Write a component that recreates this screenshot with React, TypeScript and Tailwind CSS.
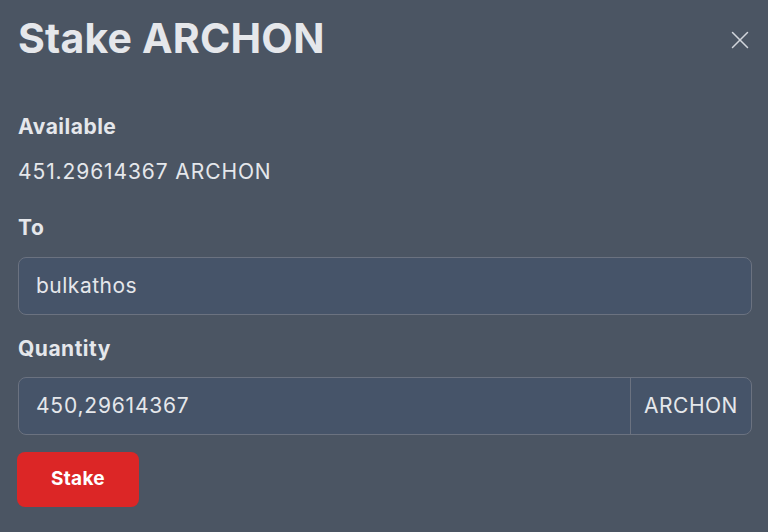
import { X } from 'lucide-react';

export default function App() {
  return (
    <div
      className="w-[768px] h-[532px] bg-[#4b5563] text-[#e5e7eb] overflow-hidden"
      style={{ fontFamily: 'Inter, "Open Sans", sans-serif' }}
    >
      <div className="flex items-center justify-between pl-[18px] pr-[13px] h-[76px]">
        <h1 className="text-[41px] font-bold leading-none tracking-[0.2px]">Stake ARCHON</h1>
        <button className="text-[#d1d5db] mt-[3px]">
          <X size={30} strokeWidth={1.2} />
        </button>
      </div>

      <div className="pl-[18px] pr-[16px] pt-[36px] text-[21px] tracking-[0.5px]">
        <div className="font-bold leading-[30px]">Available</div>
        <div className="leading-[30px] mt-[15px] tracking-[0.9px]">451.29614367 ARCHON</div>

        <div className="font-bold leading-[30px] mt-[26px]">To</div>
        <div className="mt-[14px] h-[58px] rounded-[8px] border border-[#6b7280] bg-[#465469] flex items-center px-[17px]">
          bulkathos
        </div>

        <div className="font-bold leading-[30px] mt-[19px]">Quantity</div>
        <div className="mt-[13px] h-[58px] rounded-[8px] border border-[#6b7280] bg-[#465469] flex">
          <div className="flex-1 flex items-center px-[17px] tracking-[0.8px]">450,29614367</div>
          <div className="w-[121px] border-l border-[#6b7280] flex items-center justify-center">ARCHON</div>
        </div>

        <button className="block -ml-px mt-[17px] w-[122px] h-[55px] rounded-[8px] bg-[#dc2626] text-white font-bold text-[19px] tracking-[0.3px]">
          Stake
        </button>
      </div>
    </div>
  );
}
